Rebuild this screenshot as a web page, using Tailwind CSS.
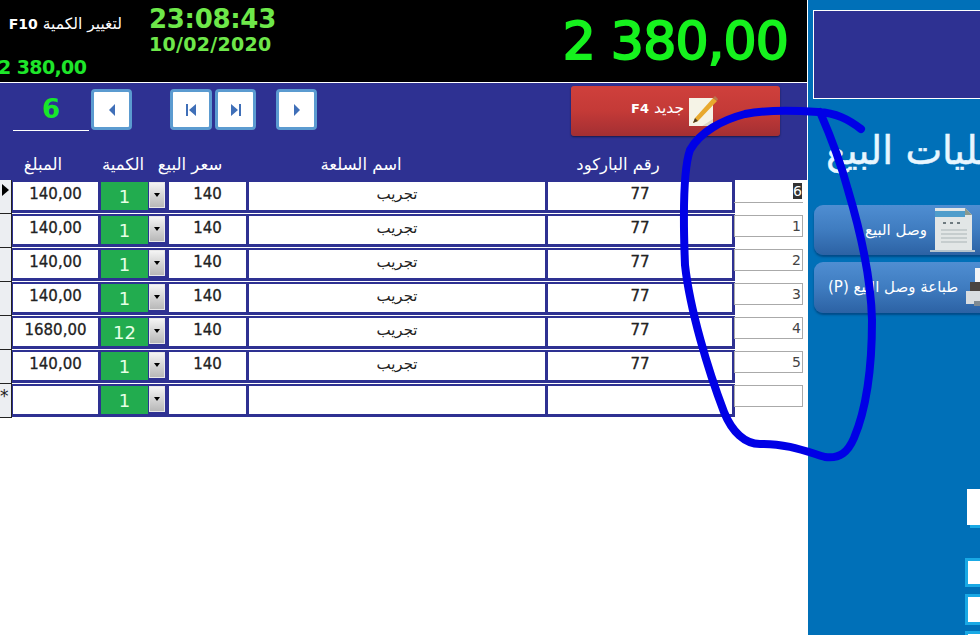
<!DOCTYPE html>
<html lang="ar">
<head>
  <meta charset="UTF-8" />
  <title>عمليات البيع</title>
  <script src="https://cdn.jsdelivr.net/npm/@tailwindcss/browser@4"></script>
</head>
<body class="bg-white font-['DejaVu_Sans',sans-serif]">
  <div class="relative flex w-[980px] h-[635px] overflow-hidden">

    <!-- left part: totals, toolbar, grid -->
    <div class="w-[807px] shrink-0 bg-white">
      <div class="flex h-[82px] bg-black">
        <div class="w-[140px] shrink-0 flex flex-col">
          <div dir="rtl" class="mt-[15px] ml-[8px] w-[114px] text-[15.5px] leading-[18px] text-white whitespace-nowrap">لتغيير الكمية <b class="text-[14px]">F10</b></div>
          <div class="mt-[22px] -ml-[2px] text-[19px] leading-[24px] font-semibold text-[#1ee62a] whitespace-nowrap tracking-[-0.6px]">2 380,00</div>
        </div>
        <div class="ml-[9px] w-[130px] shrink-0 flex flex-col items-start">
          <div class="mt-[4px] text-[26px] leading-[30px] font-semibold text-[#6ee84a] tracking-[-0.3px]">23:08:43</div>
          <div class="-mt-[1px] text-[19px] leading-[22px] font-semibold text-[#6ee84a] tracking-[0.3px]">10/02/2020</div>
        </div>
        <div class="ml-auto mr-[19px] mt-[10px] text-[52px] leading-[62px] text-[#16f21e] [-webkit-text-stroke:2px_#16f21e] whitespace-nowrap tracking-[-0.8px]">2 380,00</div>
      </div>
      <div class="h-[1px] bg-white"></div>

      <div class="h-[97px] bg-[#2e3192]">
        <div class="flex items-start">
          <div class="ml-[13px] mt-[6px] w-[76px] h-[42px] border-b border-white text-center text-[26px] leading-[41px] font-bold text-[#17e82a]">6</div>
          <button class="ml-[2px] mt-[6px] flex items-center justify-center w-[41px] h-[41px] rounded-[4px] bg-white border-[3px] border-[#5b9bd0]">
            <svg width="10" height="14" viewBox="0 0 10 14"><path d="M8 1 L2 7 L8 13 Z" fill="#3f6fb8"/></svg>
          </button>
          <button class="ml-[38px] mt-[6px] flex items-center justify-center w-[42px] h-[41px] rounded-[4px] bg-white border-[3px] border-[#5b9bd0]">
            <svg width="12" height="14" viewBox="0 0 12 14"><path d="M1 1 H3 V13 H1 Z M11 1 L4 7 L11 13 Z" fill="#3f6fb8"/></svg>
          </button>
          <button class="ml-[3px] mt-[6px] flex items-center justify-center w-[41px] h-[41px] rounded-[4px] bg-white border-[3px] border-[#5b9bd0]">
            <svg width="12" height="14" viewBox="0 0 12 14"><path d="M1 1 L8 7 L1 13 Z M9 1 H11 V13 H9 Z" fill="#3f6fb8"/></svg>
          </button>
          <button class="ml-[20px] mt-[6px] flex items-center justify-center w-[41px] h-[41px] rounded-[4px] bg-white border-[3px] border-[#5b9bd0]">
            <svg width="10" height="14" viewBox="0 0 10 14"><path d="M2 1 L8 7 L2 13 Z" fill="#3f6fb8"/></svg>
          </button>
          <button class="ml-[254px] mt-[3px] flex items-center gap-[4px] pl-[60px] w-[209px] h-[50px] rounded-[3px] bg-gradient-to-b from-[#cf403c] via-[#c43a37] to-[#a32f33] shadow-[0_1px_2px_rgba(0,0,0,0.5)]">
            <span class="text-[15.5px] leading-[16px] text-white whitespace-nowrap -mt-[5px]"><b class="text-[13px]">F4</b> <span>جديد</span></span>
            <svg width="30" height="32" viewBox="0 0 30 32" class="-mt-[1px] shrink-0">
              <path d="M1 3 H25 V31 H1 Z" fill="#f5f3e6"/>
              <path d="M1 31 H25 V24 L14 31 Z" fill="#dcd8c4"/>
              <path d="M7 23 L25 3 L29 6 L10 26 L5 28 Z" fill="#e8a92e"/>
              <path d="M25 3 L27 1 L30 4 L29 6 Z" fill="#b9764e"/>
              <path d="M7 23 L10 26 L5 28 Z" fill="#4a3a22"/>
            </svg>
          </button>
        </div>
      </div>

      <div id="grid"></div>
    </div>

    <div class="w-[1px] shrink-0 bg-white"></div>

    <!-- right panel -->
    <div class="flex-1 min-w-0 bg-[#0070b8] overflow-hidden">
      <div class="ml-[5px] mt-[10px] w-[200px] h-[89px] bg-[#2e3192] border border-white"></div>
      <div dir="rtl" class="mt-[30px] ml-[18px] w-[240px] h-[44px] text-[39px] leading-[44px] text-[#e8f6ff] [-webkit-text-stroke:0.5px_#e8f6ff] whitespace-nowrap text-left">عمليات البيع</div>

      <div class="mt-[32px] ml-[6px] w-[200px] h-[50px] flex items-center rounded-[9px] bg-gradient-to-b from-[#4f8ed2] via-[#3f7cc0] to-[#2c62a4] shadow-[0_2px_2px_rgba(0,40,90,0.5)]">
        <span class="ml-[51px] text-[15px] text-white whitespace-nowrap">وصل البيع</span>
        <svg width="46" height="46" viewBox="0 0 46 46" class="ml-[3px] shrink-0">
          <path d="M5 1 H35 L42 8 V43 H5 Z" fill="#e2e6e6"/>
          <path d="M5 4 H35 V10 H5 Z" fill="#4f9dcb"/>
          <path d="M35 1 L42 8 H35 Z" fill="#8b9a8e"/>
          <path d="M13 15 h3 v2 h-3 Z M20 15 h3 v2 h-3 Z M27 15 h3 v2 h-3 Z" fill="#6f7b80"/>
          <path d="M11 23 H37 M11 27 H37 M11 31 H37 M11 35 H37" stroke="#aab3b5" stroke-width="1.2"/>
          <path d="M0 44 H45" stroke="#b6c4cc" stroke-width="2"/>
        </svg>
      </div>
      <div class="mt-[7px] ml-[6px] w-[200px] h-[51px] flex items-center rounded-[9px] bg-gradient-to-b from-[#4f8ed2] via-[#3f7cc0] to-[#2c62a4] shadow-[0_2px_2px_rgba(0,40,90,0.5)]">
        <span dir="rtl" class="ml-[14px] text-[15px] text-white whitespace-nowrap">طباعة وصل البيع (P)</span>
        <svg width="30" height="44" viewBox="0 0 30 44" class="ml-[7px] shrink-0">
          <path d="M10 2 H30 V16 H10 Z" fill="#f2f4f6"/>
          <path d="M5 16 H30 V25 H5 Z" fill="#4a4440"/>
          <path d="M1 25 H30 V38 H1 Z" fill="#d9dde0"/>
          <path d="M9 35 H30 V40 H9 Z" fill="#7f8a92"/>
        </svg>
      </div>

      <div class="mt-[176px] ml-[159px] w-[30px] h-[36px] bg-white shadow-[3px_3px_0_#19a9e5]"></div>
      <div class="mt-[33px] ml-[157px] w-[30px] h-[29px] bg-white border-[3px] border-r-0 border-[#19a9e5]"></div>
      <div class="mt-[7px] ml-[157px] w-[30px] h-[31px] bg-white border-[3px] border-r-0 border-[#19a9e5]"></div>
      <div class="mt-[6px] ml-[157px] w-[30px] h-[20px] bg-white border-[3px] border-r-0 border-[#19a9e5]"></div>
    </div>

    <!-- hand drawn marker over the screenshot -->
    <svg class="absolute left-0 top-0 pointer-events-none" width="980" height="635" viewBox="0 0 980 635" fill="none">
      <path d="M861 129 C 848 119 836 113 818 112 C 790 110 765 110 745 114 C 722 120 700 132 690 150 C 683 170 683 215 685 265 C 690 310 708 370 724 412 C 732 432 745 444 760 444 C 785 443 808 452 825 457 C 840 459 848 452 854 438 C 868 405 872 360 872 320 C 871 280 860 230 848 190 C 840 160 830 135 820 112" stroke="#0000e6" stroke-width="8" stroke-linecap="round" stroke-linejoin="round"/>
    </svg>
  </div>

  <script>
    const rows = [
      { n: '6', amount: '140,00', qty: '1', price: '140', name: 'تجريب', code: '77', cur: true },
      { n: '1', amount: '140,00', qty: '1', price: '140', name: 'تجريب', code: '77' },
      { n: '2', amount: '140,00', qty: '1', price: '140', name: 'تجريب', code: '77' },
      { n: '3', amount: '140,00', qty: '1', price: '140', name: 'تجريب', code: '77' },
      { n: '4', amount: '1680,00', qty: '12', price: '140', name: 'تجريب', code: '77' },
      { n: '5', amount: '140,00', qty: '1', price: '140', name: 'تجريب', code: '77' },
      { n: '', amount: '', qty: '1', price: '', name: '', code: '', isNew: true },
    ];

    const headers = `
      <div class="flex h-0">
        <div class="relative -top-[29px] flex w-[735px] h-[30px] pl-[13px] text-[16.5px] leading-[28px] text-white text-center whitespace-nowrap">
          <div class="w-[60px]">المبلغ</div>
          <div class="ml-[20px] w-[60px]">الكمية</div>
          <div class="ml-[2px] w-[70px]">سعر البيع</div>
          <div class="ml-[86px] w-[100px]">اسم السلعة</div>
          <div class="ml-[157px] w-[100px]">رقم الباركود</div>
        </div>
      </div>`;

    document.getElementById('grid').innerHTML = headers + rows.map(r => `
      <div class="flex h-[34px]">
        <div class="relative w-[12px] h-[34px] shrink-0 bg-[#eceef2] border-r border-b border-[#222] text-[17px] leading-[24px] text-[#222]">${r.cur ? '<span class="absolute left-[2px] top-[4px] border-y-[6px] border-l-[7px] border-y-transparent border-l-black"></span>' : ''}${r.isNew ? '*' : ''}</div>
        <div class="grid grid-cols-[85px_65px_77px_296px_184px] grid-rows-[28px] gap-x-[3px] w-[723px] h-[33px] shrink-0 pl-[1px] pr-[3px] pt-[2px] pb-[3px] bg-[#2e3192] text-[15px] leading-[24px] text-[#222] [-webkit-text-stroke:0.3px_#222] text-center">
          <div class="bg-white">${r.amount}</div>
          <div class="flex h-[28px] bg-[#2e3192]">
            <div class="w-[47px] h-[28px] bg-[#22ac4f] text-[18px] leading-[30px] text-[#e6ffe6] [-webkit-text-stroke:0]">${r.qty}</div>
            <div class="flex items-center justify-center ml-[1px] w-[16px] h-[26px] bg-gradient-to-b from-[#f4f4f4] to-[#b8b8b8] border border-[#e8e8e8]">
              <span class="border-x-[3px] border-t-[4px] border-x-transparent border-t-black"></span>
            </div>
          </div>
          <div class="bg-white">${r.price}</div>
          <div class="bg-white [-webkit-text-stroke:0]">${r.name}</div>
          <div class="bg-white">${r.code}</div>
        </div>
        <div class="-ml-[1px] mt-[1px] w-[69px] h-[22px] shrink-0 text-right text-[14px] leading-[20px] text-[#444] border-[#aaa] ${r.cur ? 'border-b' : 'border'} pr-[1px]">
          <span class="${r.cur ? 'bg-[#333] text-white' : ''}">${r.n}</span>
        </div>
      </div>`).join('');
  </script>
</body>
</html>
